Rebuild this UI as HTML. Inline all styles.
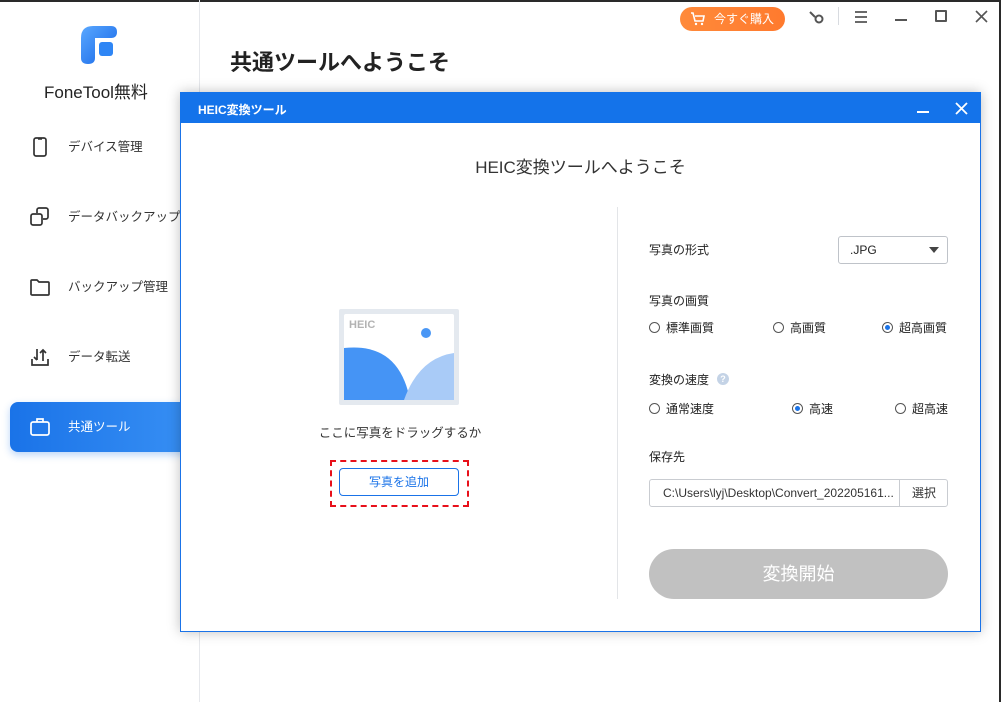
<!DOCTYPE html>
<html><head><meta charset="utf-8"><style>
*{margin:0;padding:0;box-sizing:border-box}
body{width:1001px;height:702px;position:relative;overflow:hidden;background:#fff;font-family:"Liberation Sans","Noto Sans CJK JP",sans-serif;color:#222}
.a{position:absolute}
.side{left:0;top:0;width:200px;height:702px;border-right:1px solid #e6e8ec}
.item{position:absolute;left:68px;font-size:12.5px;color:#333;line-height:14px}
.ic{position:absolute;left:30px;width:20px;height:20px}
.radio{display:inline-block;width:11px;height:11px;border:1px solid #555;border-radius:50%;vertical-align:-1px;margin-right:6px;position:relative}
.radio.on::after{content:"";position:absolute;left:2px;top:2px;width:5px;height:5px;border-radius:50%;background:#1a73e8}
.lbl{font-size:12px;color:#222;line-height:14px}
</style></head><body>
<div class="a" style="left:0;top:0;width:1001px;height:2px;background:#2a2a2a"></div>
<div class="a" style="right:0;top:0;width:2px;height:702px;background:#2a2a2a"></div>
<div class="a side"></div>
<svg class="a" style="left:81px;top:26px" width="37" height="38" viewBox="0 0 37 38"><defs><linearGradient id="g" x1="0" y1="0" x2="1" y2="1"><stop offset="0" stop-color="#5aa8ff"/><stop offset="1" stop-color="#1464e6"/></linearGradient></defs><path d="M0 12 Q0 0 12 0 H30 Q36 0 36 6 Q36 12 30 12 H14 V32 Q14 38 7 38 Q0 38 0 32 Z" fill="url(#g)"/><rect x="18" y="16" width="14" height="14" rx="3" fill="#2f86f5"/></svg>
<div class="a" style="left:44px;top:78px;font-size:17px;color:#222">FoneTool無料</div>
<svg class="ic" style="top:137px" viewBox="0 0 20 20"><rect x="4" y="1" width="12" height="18" rx="2" fill="none" stroke="#333" stroke-width="1.7"/><line x1="8" y1="2" x2="12" y2="2" stroke="#333" stroke-width="1.5"/></svg>
<div class="item" style="top:140px">デバイス管理</div>
<svg class="ic" style="top:207px" viewBox="0 0 20 20"><rect x="1" y="7" width="11" height="11" rx="2" fill="none" stroke="#333" stroke-width="1.7"/><path d="M7 6V3a2 2 0 0 1 2-2h7a2 2 0 0 1 2 2v7a2 2 0 0 1-2 2h-3" fill="none" stroke="#333" stroke-width="1.7"/></svg>
<div class="item" style="top:210px">データバックアップ</div>
<svg class="ic" style="top:277px" viewBox="0 0 20 20"><path d="M1 4a1 1 0 0 1 1-1h5l2 2h9a1 1 0 0 1 1 1v11a1 1 0 0 1-1 1H2a1 1 0 0 1-1-1z" fill="none" stroke="#333" stroke-width="1.7"/></svg>
<div class="item" style="top:280px">バックアップ管理</div>
<svg class="ic" style="top:347px" viewBox="0 0 20 20"><path d="M2 12v6h16v-6M7 2v11M4 10l3 3M13 14V3M10 6l3-3 3 3" fill="none" stroke="#333" stroke-width="1.7"/></svg>
<div class="item" style="top:350px">データ転送</div>
<div class="a" style="left:10px;top:402px;width:200px;height:50px;border-radius:8px;background:linear-gradient(90deg,#1a73e8,#3a92f5);box-shadow:0 3px 8px rgba(26,115,232,.3)"></div>
<svg class="ic" style="top:417px" viewBox="0 0 20 20"><rect x="1" y="5" width="18" height="13" rx="2" fill="none" stroke="#fff" stroke-width="1.7"/><path d="M7 5V2h6v3" fill="none" stroke="#fff" stroke-width="1.7"/></svg>
<div class="item" style="top:420px;color:#fff">共通ツール</div>
<div class="a" style="left:230px;top:45px;font-size:22px;font-weight:bold;color:#222">共通ツールへようこそ</div>
<div class="a" style="left:680px;top:7px;width:105px;height:24px;border-radius:12px;background:linear-gradient(90deg,#ff8a3a,#ff7a2e);color:#fff;font-size:12px;line-height:24px;padding-left:34px">今すぐ購入</div>
<svg class="a" style="left:690px;top:11px" width="16" height="16" viewBox="0 0 16 16"><path d="M1 2h2l2 8h8l1-5H5" fill="none" stroke="#fff" stroke-width="1.6"/><circle cx="6" cy="13" r="1.2" fill="#fff"/><circle cx="12" cy="13" r="1.2" fill="#fff"/></svg>
<svg class="a" style="left:807px;top:9px" width="18" height="16" viewBox="0 0 18 16"><path d="M3 3l5 5" stroke="#555" stroke-width="2"/><circle cx="12" cy="10" r="3.5" fill="none" stroke="#555" stroke-width="2"/></svg>
<div class="a" style="left:838px;top:7px;width:1px;height:18px;background:#d8dbe0"></div>
<svg class="a" style="left:854px;top:11px" width="14" height="12"><path d="M1 1h12M1 6h12M1 11h12" stroke="#555" stroke-width="1.8"/></svg>
<div class="a" style="left:895px;top:19px;width:12px;height:2px;background:#555"></div>
<div class="a" style="left:935px;top:10px;width:12px;height:12px;border:2px solid #555;border-radius:1px"></div>
<svg class="a" style="left:975px;top:10px" width="13" height="13"><path d="M1 1l11 11M12 1L1 12" stroke="#555" stroke-width="1.6"/></svg>
<div class="a" style="left:180px;top:92px;width:801px;height:540px;background:#fff;border:1px solid #1a73e8;box-shadow:0 0 12px rgba(0,0,0,.25)"></div>
<div class="a" style="left:180px;top:92px;width:801px;height:31px;background:#1473ea"></div>
<div class="a" style="left:198px;top:101px;color:#fff;font-size:12px;font-weight:bold">HEIC変換ツール</div>
<div class="a" style="left:917px;top:111px;width:12px;height:2px;background:#fff"></div>
<svg class="a" style="left:955px;top:102px" width="13" height="13"><path d="M1 1l11 11M12 1L1 12" stroke="#fff" stroke-width="1.8"/></svg>
<div class="a" style="left:180px;top:153px;width:801px;text-align:center;font-size:17px;color:#333">HEIC変換ツールへようこそ</div>
<div class="a" style="left:617px;top:207px;width:1px;height:392px;background:#e3e5e8"></div>
<div class="a" style="left:339px;top:309px;width:120px;height:96px;background:#e4e9ef;border-radius:2px"></div>
<svg class="a" style="left:344px;top:314px" width="110" height="86" viewBox="0 0 110 86"><rect width="110" height="86" rx="2" fill="#fff"/><circle cx="82" cy="19" r="5" fill="#4a97f5"/><path d="M0 34 Q55 28 66 86 H0Z" fill="#4594f5"/><path d="M60 86 Q75 44 110 39 V86Z" fill="#a9cbf7"/><text x="5" y="14" font-family="Liberation Sans" font-weight="bold" font-size="11" fill="#b3b3b3">HEIC</text></svg>
<div class="a" style="left:300px;top:422px;width:200px;text-align:center;font-size:12.5px;color:#333">ここに写真をドラッグするか</div>
<div class="a" style="left:330px;top:460px;width:139px;height:47px;border:2.5px dashed #e8101a"></div>
<div class="a" style="left:339px;top:468px;width:120px;height:28px;border:1px solid #1a73e8;border-radius:4px;color:#1a73e8;font-size:12px;text-align:center;line-height:26px">写真を追加</div>
<div class="a lbl" style="left:649px;top:243px">写真の形式</div>
<div class="a" style="left:838px;top:236px;width:110px;height:28px;border:1px solid #bfc3c9;border-radius:3px;font-size:12px;line-height:26px;padding-left:11px">.JPG</div>
<div class="a" style="left:929px;top:247px;border-left:5px solid transparent;border-right:5px solid transparent;border-top:6px solid #444"></div>
<div class="a lbl" style="left:649px;top:294px">写真の画質</div>
<div class="a lbl" style="left:649px;top:321px"><span class="radio"></span>標準画質</div>
<div class="a lbl" style="left:773px;top:321px"><span class="radio"></span>高画質</div>
<div class="a lbl" style="left:882px;top:321px"><span class="radio on"></span>超高画質</div>
<div class="a lbl" style="left:649px;top:373px">変換の速度</div>
<div class="a" style="left:717px;top:373px;width:12px;height:12px;border-radius:50%;background:#c4d3e6;color:#fff;font-size:9px;text-align:center;line-height:12px;font-weight:bold">?</div>
<div class="a lbl" style="left:649px;top:402px"><span class="radio"></span>通常速度</div>
<div class="a lbl" style="left:792px;top:402px"><span class="radio on"></span>高速</div>
<div class="a lbl" style="left:895px;top:402px"><span class="radio"></span>超高速</div>
<div class="a lbl" style="left:649px;top:450px">保存先</div>
<div class="a" style="left:649px;top:479px;width:299px;height:28px;border:1px solid #c9ccd1;border-radius:3px;font-size:12px;line-height:26px;padding-left:13px;color:#333">C:\Users\lyj\Desktop\Convert_202205161...</div>
<div class="a" style="left:899px;top:479px;width:1px;height:28px;background:#c9ccd1"></div>
<div class="a" style="left:900px;top:479px;width:48px;height:28px;font-size:12px;line-height:28px;text-align:center;color:#333">選択</div>
<div class="a" style="left:649px;top:549px;width:299px;height:50px;border-radius:25px;background:#c1c1c1;color:#fff;font-size:18px;text-align:center;line-height:50px">変換開始</div>
</body></html>
